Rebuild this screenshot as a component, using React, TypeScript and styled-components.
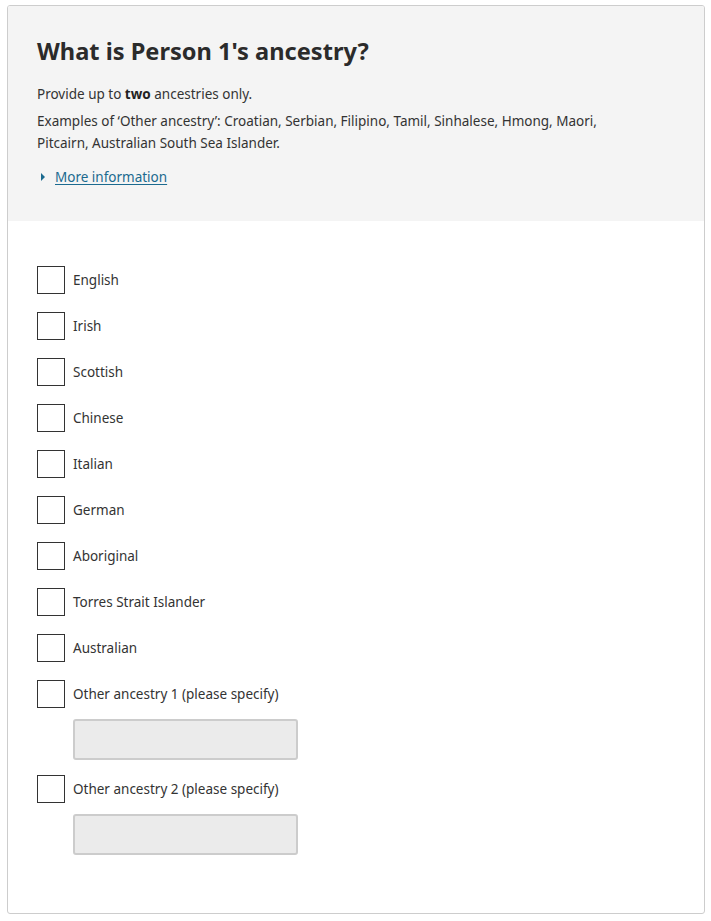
import React, { useState } from "react";
import styled, { createGlobalStyle } from "styled-components";

const GlobalStyle = createGlobalStyle`
  html, body {
    margin: 0;
    padding: 0;
    background: #fff;
  }
  body {
    font-family: "Noto Sans", "Open Sans", Arial, sans-serif;
    color: #333;
  }
  * {
    box-sizing: border-box;
  }
`;

const Page = styled.div`
  padding: 5px 6px 7px 7px;
`;

const Card = styled.div`
  border: 1px solid #cdcdcd;
  border-radius: 3px;
  overflow: hidden;
`;

const Header = styled.div`
  background: #f4f4f4;
  padding: 29px 29px 33px 29px;
`;

const Title = styled.h1`
  margin: 0 0 16px 0;
  font-size: 23.6px;
  line-height: 32px;
  font-weight: 700;
  color: #2b2b2b;
`;

const Text = styled.p`
  margin: 0 0 5px 0;
  max-width: 580px;
  font-size: 13.5px;
  line-height: 22px;
  color: #333;

  b {
    font-weight: 700;
    color: #222;
  }
`;

const MoreInfo = styled.button`
  display: flex;
  align-items: center;
  gap: 10px;
  margin-top: 12px;
  padding: 0 0 0 4px;
  border: none;
  background: none;
  cursor: pointer;
  font-family: inherit;
  font-size: 13.5px;
  line-height: 22px;
  color: #1b6a8f;
  text-decoration: underline;
  text-underline-offset: 2px;
`;

const Caret = styled.span`
  width: 0;
  height: 0;
  border-top: 4px solid transparent;
  border-bottom: 4px solid transparent;
  border-left: 4px solid #1b6a8f;
`;

const Body = styled.div`
  padding: 45px 29px 58px 29px;
  display: flex;
  flex-direction: column;
`;

const Option = styled.div<{ $specify?: boolean }>`
  display: flex;
  flex-direction: column;
  gap: 11px;
  margin-bottom: ${(props) => (props.$specify ? "15px" : "18px")};

  &:last-child {
    margin-bottom: 0;
  }
`;

const CheckRow = styled.label`
  display: flex;
  align-items: center;
  gap: 8px;
  cursor: pointer;
  font-size: 13.5px;
  line-height: 20px;
  color: #333;
`;

const Box = styled.span`
  flex: none;
  width: 28px;
  height: 28px;
  border: 1px solid #333;
  background: #fff;
  display: flex;
  align-items: center;
  justify-content: center;
`;

const SpecifyInput = styled.input`
  display: block;
  margin: 0 0 0 36px;
  width: 225px;
  height: 41px;
  border: 2px solid #cccccc;
  border-radius: 3px;
  background: #ebebeb;
  font-family: inherit;
  font-size: 13px;
  padding: 0 8px;
  color: #333;
`;

const options = [
  { label: "English" },
  { label: "Irish" },
  { label: "Scottish" },
  { label: "Chinese" },
  { label: "Italian" },
  { label: "German" },
  { label: "Aboriginal" },
  { label: "Torres Strait Islander" },
  { label: "Australian" },
  { label: "Other ancestry 1 (please specify)", specify: true },
  { label: "Other ancestry 2 (please specify)", specify: true },
];

const App: React.FC = () => {
  const [checked, setChecked] = useState<boolean[]>(options.map(() => false));

  const toggle = (index: number) => {
    setChecked(checked.map((c, i) => (i === index ? !c : c)));
  };

  return (
    <Page>
      <GlobalStyle />
      <Card>
        <Header>
          <Title>What is Person 1's ancestry?</Title>
          <Text>
            Provide up to <b>two</b> ancestries only.
          </Text>
          <Text>
            Examples of ‘Other ancestry’: Croatian, Serbian, Filipino, Tamil,
            Sinhalese, Hmong, Maori, Pitcairn, Australian South Sea Islander.
          </Text>
          <MoreInfo type="button">
            <Caret />
            More information
          </MoreInfo>
        </Header>
        <Body>
          {options.map((option, index) => (
            <Option key={option.label} $specify={option.specify}>
              <CheckRow onClick={() => toggle(index)}>
                <Box>
                  {checked[index] && (
                    <svg width="18" height="18" viewBox="0 0 18 18">
                      <path d="M3 9l4 4 8-8" stroke="#333" strokeWidth="2" fill="none" />
                    </svg>
                  )}
                </Box>
                {option.label}
              </CheckRow>
              {option.specify && <SpecifyInput type="text" />}
            </Option>
          ))}
        </Body>
      </Card>
    </Page>
  );
};

export default App;
